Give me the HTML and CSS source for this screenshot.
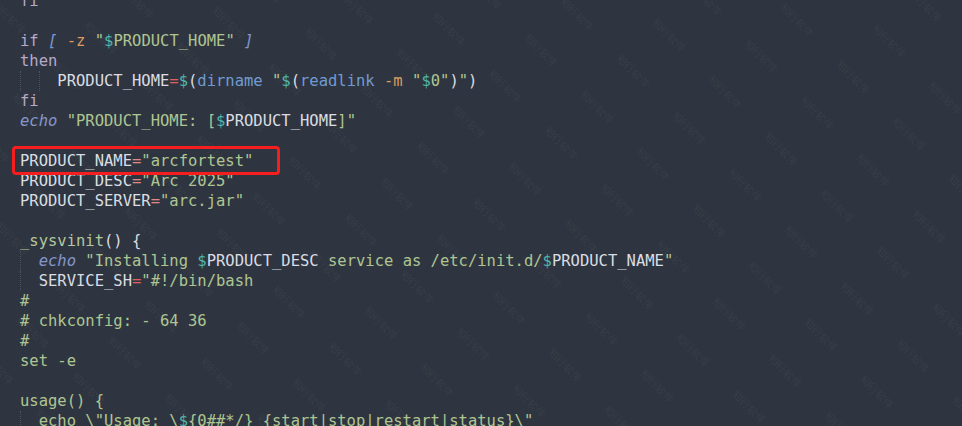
FILE: index.html
```html
<!DOCTYPE html>
<html lang="en">
<head>
    <meta charset="UTF-8">
    <meta name="viewport" content="width=device-width, initial-scale=1.0">
    <title>install.sh</title>
    <link rel="stylesheet" href="styles.css">
</head>
<body>
    <div class="editor">
        <div class="code">
            <div class="line"><span class="kw">fi</span></div>
            <div class="line"></div>
            <div class="line"><span class="kw">if</span> <span class="br">[</span> <span class="flag">-z</span> <span class="str">"<span class="var">$</span>PRODUCT_HOME"</span> <span class="br">]</span></div>
            <div class="line"><span class="kw">then</span></div>
            <div class="line"><span class="guide"></span><span class="guide"></span>PRODUCT_HOME<span class="eq">=</span><span class="var">$</span>(<span class="fn">dirname</span> <span class="str">"</span><span class="var">$</span>(<span class="fn">readlink</span> <span class="flag">-m</span> <span class="str">"<span class="var">$</span>0"</span>)<span class="str">"</span>)</div>
            <div class="line"><span class="kw">fi</span></div>
            <div class="line"><span class="bi">echo</span> <span class="str">"PRODUCT_HOME: [<span class="var">$</span><span class="plain">PRODUCT_HOME</span>]"</span></div>
            <div class="line"></div>
            <div class="line"><span class="mark">PRODUCT_NAME<span class="eq soft">=</span><span class="str">"arcfortest"</span></span></div>
            <div class="line">PRODUCT_DESC<span class="eq soft">=</span><span class="str">"Arc 2025"</span></div>
            <div class="line">PRODUCT_SERVER<span class="eq soft">=</span><span class="str">"arc.jar"</span></div>
            <div class="line"></div>
            <div class="line"><span class="def">_sysvinit</span>() {</div>
            <div class="line"><span class="guide"></span><span class="bi">echo</span> <span class="str">"Installing <span class="var">$</span><span class="plain">PRODUCT_DESC</span> service as /etc/init.d/<span class="var">$</span><span class="plain">PRODUCT_NAME</span>"</span></div>
            <div class="line"><span class="guide"></span>SERVICE_SH<span class="eq">=</span><span class="str">"#!/bin/bash</span></div>
            <div class="line str">#</div>
            <div class="line str"># chkconfig: - 64 36</div>
            <div class="line str">#</div>
            <div class="line str">set -e</div>
            <div class="line"></div>
            <div class="line str">usage() {</div>
            <div class="line str"><span class="guide"></span>echo \"Usage: \<span class="var">$</span>{0##*/} {start|stop|restart|status}\"</div>
        </div>
        <svg class="watermark" id="watermark" width="962" height="426"></svg>
    </div>

    <script>
        const watermark = document.getElementById('watermark');
        const ns = 'http://www.w3.org/2000/svg';

        // lattice measured from the screenshot
        for (let i = -12; i <= 12; i++) {
            for (let j = -12; j <= 16; j++) {
                const x = 852 + i * 92 - j * 36;
                const y = 78 + i * 21 + j * 36;
                if (x < -40 || x > 1000 || y < -40 || y > 470) continue;
                const text = document.createElementNS(ns, 'text');
                text.setAttribute('x', x);
                text.setAttribute('y', y);
                text.setAttribute('transform', `rotate(45 ${x} ${y})`);
                text.textContent = '知行软件';
                watermark.appendChild(text);
            }
        }
    </script>
</body>
</html>
```

FILE: styles.css
```css
html, body {
    margin: 0;
    background: #2f3540;
}

.editor {
    position: relative;
    width: 962px;
    height: 426px;
    overflow: hidden;
}

.code {
    margin-top: -9px;
    padding-left: 20px;
    font-family: "DejaVu Sans Mono", "Liberation Mono", monospace;
    font-size: 15.5px;
    line-height: 20px;
    color: #d9dde3;
}

.line {
    height: 20px;
    white-space: pre;
}

.guide {
    display: inline-block;
    width: 2ch;
    height: 20px;
    vertical-align: top;
    box-sizing: border-box;
    border-left: 1px dotted #4b5260;
}

.kw {
    color: #b5a9cc;
}

.br {
    color: #7b98cf;
    font-style: italic;
}

.flag {
    color: #dc9a5e;
}

.str {
    color: #aec592;
}

.var {
    color: #4db5a9;
}

.plain {
    color: #d9dde3;
}

.eq {
    color: #e0605f;
}

.eq.soft {
    color: #e08a86;
}

.fn {
    color: #6f9bd0;
}

.bi {
    color: #8596cc;
    font-style: italic;
}

.def {
    color: #b3c79c;
}

.mark {
    position: relative;
    display: inline-block;
}

.mark::after {
    content: "";
    position: absolute;
    left: -8px;
    right: -27px;
    top: -5px;
    bottom: -4px;
    border: 3px solid #f51d1d;
    border-radius: 4px;
}

.watermark {
    position: absolute;
    left: 0;
    top: 0;
    pointer-events: none;
}

.watermark text {
    font-family: "Noto Sans CJK SC", sans-serif;
    font-size: 10.5px;
    text-anchor: middle;
    dominant-baseline: middle;
    fill: rgba(255, 255, 255, 0.06);
}
```
